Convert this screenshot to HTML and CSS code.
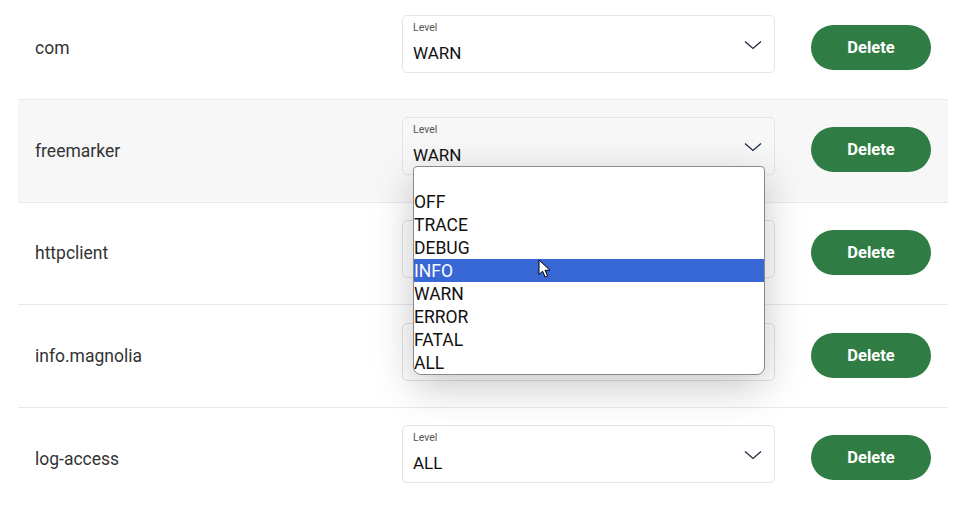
FILE: index.html
```html
<!DOCTYPE html>
<html>
<head>
<meta charset="utf-8">
<link rel="stylesheet" href="styles.css">
</head>
<body>
<div class="list">
  <div class="row">
    <div class="name">com</div>
    <div class="field">
      <span class="label">Level</span>
      <span class="value">WARN</span>
      <svg class="chev" width="18" height="10" viewBox="0 0 18 10"><path d="M1 1.5 L9 8.5 L17 1.5" fill="none" stroke="#1d2a44" stroke-width="1.3"/></svg>
    </div>
    <button class="del">Delete</button>
  </div>
  <div class="row hover">
    <div class="name">freemarker</div>
    <div class="field open">
      <span class="label">Level</span>
      <span class="value">WARN</span>
      <svg class="chev" width="18" height="10" viewBox="0 0 18 10"><path d="M1 1.5 L9 8.5 L17 1.5" fill="none" stroke="#1d2a44" stroke-width="1.3"/></svg>
      <ul class="menu">
        <li>&nbsp;</li>
        <li>OFF</li>
        <li>TRACE</li>
        <li>DEBUG</li>
        <li class="sel">INFO
          <svg class="cursor" width="14" height="20" viewBox="0 0 14 20"><path d="M1 1 L1 15.5 L4.6 12.2 L7.2 18 L9.6 17 L7.1 11.3 L12 11.3 Z" fill="#fff" stroke="#000" stroke-width="1" stroke-linejoin="round"/></svg>
        </li>
        <li>WARN</li>
        <li>ERROR</li>
        <li>FATAL</li>
        <li>ALL</li>
      </ul>
    </div>
    <button class="del">Delete</button>
  </div>
  <div class="row">
    <div class="name">httpclient</div>
    <div class="field">
      <span class="label">Level</span>
      <span class="value">INFO</span>
      <svg class="chev" width="18" height="10" viewBox="0 0 18 10"><path d="M1 1.5 L9 8.5 L17 1.5" fill="none" stroke="#1d2a44" stroke-width="1.3"/></svg>
    </div>
    <button class="del">Delete</button>
  </div>
  <div class="row">
    <div class="name">info.magnolia</div>
    <div class="field">
      <span class="label">Level</span>
      <span class="value">INFO</span>
      <svg class="chev" width="18" height="10" viewBox="0 0 18 10"><path d="M1 1.5 L9 8.5 L17 1.5" fill="none" stroke="#1d2a44" stroke-width="1.3"/></svg>
    </div>
    <button class="del">Delete</button>
  </div>
  <div class="row">
    <div class="name">log-access</div>
    <div class="field">
      <span class="label">Level</span>
      <span class="value">ALL</span>
      <svg class="chev" width="18" height="10" viewBox="0 0 18 10"><path d="M1 1.5 L9 8.5 L17 1.5" fill="none" stroke="#1d2a44" stroke-width="1.3"/></svg>
    </div>
    <button class="del">Delete</button>
  </div>
</div>
</body>
</html>
```
FILE: styles.css
```css
html, body {
  margin: 0;
  padding: 0;
  background: #fff;
  overflow: hidden;
}
body {
  font-family: Roboto, "Liberation Sans", sans-serif;
  color: #333;
}
.list {
  margin: -2.67px 18px 0 18px;
  width: 930px;
}
.row {
  height: 101.67px;
  border-bottom: 1px solid #e9e9e9;
  display: flex;
  align-items: center;
  box-sizing: content-box;
}
.row.hover {
  background: #f7f7f7;
}
.name {
  width: 367px;
  padding-left: 17px;
  font-size: 17.5px;
  color: #333;
}
.field {
  position: relative;
  width: 361px;
  height: 56px;
  border: 1px solid #e4e4e4;
  border-radius: 5px;
  margin-bottom: 9px;
  display: flex;
  flex-direction: column;
  padding-left: 10px;
  box-sizing: content-box;
}
.label {
  font-size: 10.5px;
  color: #555;
  margin-top: 6px;
  line-height: 12px;
}
.value {
  font-size: 17px;
  color: #111;
  margin-top: 9px;
  line-height: 20px;
}
.chev {
  position: absolute;
  right: 12px;
  top: 24px;
}
.del {
  margin-left: 36px;
  width: 120px;
  height: 45px;
  border: none;
  border-radius: 23px;
  background: #2f7d44;
  color: #fff;
  font-family: Roboto, "Liberation Sans", sans-serif;
  font-weight: 700;
  font-size: 16.5px;
  padding: 0;
  margin-bottom: 2px;
}
.menu {
  position: absolute;
  left: 10px;
  top: 48px;
  width: 350px;
  margin: 0;
  padding: 0;
  list-style: none;
  background: #fff;
  border: 1px solid #8a8a8a;
  border-radius: 4px 4px 8px 8px;
  box-shadow: 0 12px 40px rgba(0, 0, 0, 0.22);
  z-index: 5;
}
.menu li {
  position: relative;
  height: 23px;
  line-height: 24px;
  font-size: 17.5px;
  color: #111;
  font-family: Roboto, "Liberation Sans", sans-serif;
}
.menu li.sel {
  background: #3867d6;
  color: #fff;
}
.cursor {
  position: absolute;
  left: 124px;
  top: 0px;
}
```
